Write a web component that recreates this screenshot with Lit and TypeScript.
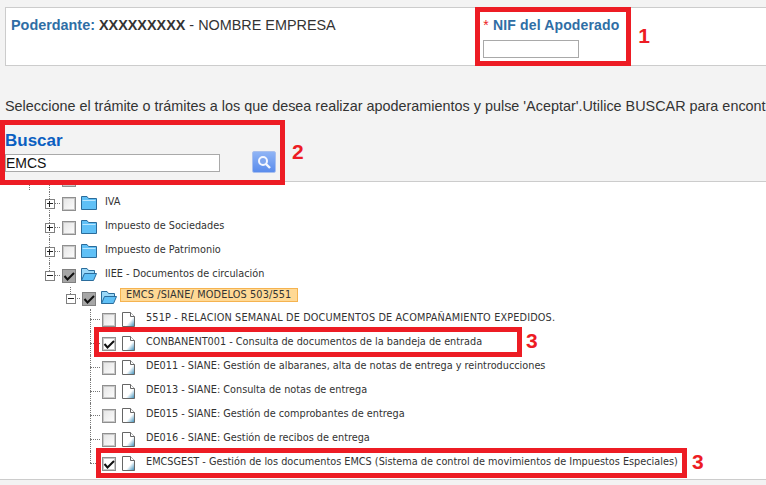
import { LitElement, html, css, svg } from "lit";
import { customElement } from "lit/decorators.js";

type Row = {
  h: number; out?: number; g: number; end?: boolean; expander?: "plus" | "minus"; check: "off" | "part" | "on";
  icon: "closed" | "open" | "page"; text: string; hl?: boolean; caps?: boolean;
};

const folderClosed = svg`<path d="M0.500 14.500v-13h5.500l1.500 2h8v11z" fill="#5fc0f6" stroke="#2b6c9b"/><path d="M1.500 5.500h13" stroke="#b9e6ff"/>`;
const folderOpen = svg`<path d="M0.500 13.500v-12h5.500l1.500 2h6v2.500" fill="#9ad8f8" stroke="#2b6c9b"/><path d="M0.500 13.500l3-7h12l-3 7z" fill="#5fc0f6" stroke="#2b6c9b"/>`;
const page = svg`<defs><linearGradient id="pg" x1="0.3" y1="0.3" x2="1" y2="1"><stop offset="0.45" stop-color="#fff"/><stop offset="1" stop-color="#2d86b5"/></linearGradient></defs><path d="M0.500 0.500h8l4 4v10h-12z" fill="url(#pg)" stroke="#666"/><path d="M8.500 0.500v4h4" fill="#fff" stroke="#666"/>`;

const rows: Row[] = [
  { h: 24, g: 49, expander: "plus", check: "off", icon: "closed", text: "IVA" },
  { h: 24, g: 49, expander: "plus", check: "off", icon: "closed", text: "Impuesto de Sociedades" },
  { h: 24, g: 49, expander: "plus", check: "off", icon: "closed", text: "Impuesto de Patrimonio" },
  { h: 24, g: 49, end: true, expander: "minus", check: "part", icon: "open", text: "IIEE - Documentos de circulación" },
  { h: 22, g: 70, end: true, expander: "minus", check: "part", icon: "open", text: "EMCS /SIANE/ MODELOS 503/551", hl: true, caps: true },
  { h: 20, out: 22, g: 90, check: "off", icon: "page", text: "551P - RELACION SEMANAL DE DOCUMENTOS DE ACOMPAÑAMIENTO EXPEDIDOS.", caps: true },
  { h: 24, g: 90, check: "on", icon: "page", text: "CONBANENT001 - Consulta de documentos de la bandeja de entrada" },
  { h: 24, g: 90, check: "off", icon: "page", text: "DE011 - SIANE: Gestión de albaranes, alta de notas de entrega y reintroducciones" },
  { h: 24, g: 90, check: "off", icon: "page", text: "DE013 - SIANE: Consulta de notas de entrega" },
  { h: 24, g: 90, check: "off", icon: "page", text: "DE015 - SIANE: Gestión de comprobantes de entrega" },
  { h: 24, g: 90, check: "off", icon: "page", text: "DE016 - SIANE: Gestión de recibos de entrega" },
  { h: 24, g: 90, end: true, check: "on", icon: "page", text: "EMCSGEST - Gestión de los documentos EMCS (Sistema de control de movimientos de Impuestos Especiales)" },
];

@customElement("app-root")
export class AppRoot extends LitElement {
  static styles = css`
    :host { display: block; width: 766px; height: 485px; overflow: hidden; background: #f3f3f3; font-family: "Liberation Sans", Arial, sans-serif; color: #333; }
    .top { margin: 7px 0 0 5px; height: 57px; background: #fff; border: 1px solid #ccc; border-right: 0; display: flex; justify-content: space-between; }
    .who { margin: 9px 0 0 5px; font-size: 14.4px; line-height: 16px; }
    .who .k { color: #2f6ea5; font-weight: bold; }
    .nif-wrap { display: flex; align-items: flex-start; margin: -1px 116px 0 0; }
    .nif { width: 146px; height: 49px; border: 5px solid #ed1c24; display: flex; flex-direction: column; }
    .nif label { font-size: 14px; font-weight: bold; color: #2f6ea5; line-height: 16px; margin: 5px 0 0 3px; white-space: nowrap; letter-spacing: 0.15px; }
    .nif label span { color: #ed1c24; font-weight: normal; }
    .nif .inp { width: 94px; height: 16px; margin: 7px 0 0 3px; border: 1px solid #a9a9a9; background: #fff; }
    .num { color: #ed1c24; font-weight: bold; font-size: 21px; line-height: 24px; }
    .nif-wrap .num { margin: 17px 0 0 7px; }
    .intro { margin: 31px 0 0 5px; font-size: 14.4px; line-height: 18px; white-space: nowrap; height: 18px; }
    .search-row { display: flex; align-items: flex-start; height: 61px; margin-top: 5px; position: relative; z-index: 2; }
    .search { box-sizing: border-box; width: 285px; height: 65px; border: 5px solid #ed1c24; position: relative; }
    .search h2 { margin: 0; font-size: 17px; line-height: 20px; padding-top: 6px; color: #0b5fc1; font-weight: bold; }
    .search .inp { box-sizing: border-box; width: 215px; height: 18px; margin-top: 3px; background: #fff; border: 1px solid #a9a9a9; font-size: 14px; line-height: 17px; color: #111; }
    .search button { position: absolute; left: 247px; top: 26px; width: 24px; height: 22px; padding: 0; border: 1px solid #a9c0ee; border-radius: 2px; background: linear-gradient(#8fb4f5, #5a8cec); display: flex; align-items: center; justify-content: center; }
    .search-row .num { margin: 20px 0 0 7px; }
    .tree { background: #fff; border-top: 1px solid #ccc; border-bottom: 1px solid #ccc; padding-top: 9px; height: 288px; position: relative; overflow: hidden; }
    .row { position: relative; font-family: "DejaVu Sans", Tahoma, sans-serif; font-stretch: condensed; font-size: 10.8px; color: #333; white-space: nowrap; }
    .in { position: absolute; left: 0; right: 0; top: 0; }
    .guide { position: absolute; width: 0; top: 0; bottom: 0; border-left: 1px dotted #777; }
    .guide.end { bottom: 50%; }
    .hline { position: absolute; height: 0; top: 50%; border-top: 1px dotted #777; }
    .exp { position: absolute; top: 50%; margin-top: -4px; box-sizing: border-box; width: 10px; height: 10px; background: #fff; border: 1px solid #808080; }
    .exp::before { content: ""; position: absolute; left: 1px; right: 1px; top: 3px; height: 1px; background: #222; }
    .exp.plus::after { content: ""; position: absolute; top: 1px; bottom: 1px; left: 3px; width: 1px; background: #222; }
    .cb { position: absolute; top: 50%; margin-top: -6px; box-sizing: border-box; width: 14px; height: 14px; border: 1px solid #8f8f8f; box-shadow: inset 0 0 0 1px #c8c8c8; background: linear-gradient(135deg, #e4e4e4, #fdfdfd); }
    .cb.part { background: #a6a6a6; border-color: #808080; box-shadow: none; }
    .cb.on { background: #fff; }
    .cb svg { display: block; position: absolute; left: -1px; top: -1px; }
    .ico { position: absolute; top: 50%; margin-top: -8px; display: block; }
    .ico.pg { margin-top: -7px; }
    .lab { position: absolute; top: 50%; transform: translateY(-50%); line-height: 14px; margin-top: -1px; }
    .lab.caps { letter-spacing: 0.15px; }
    .lab.hl { background: #ffd995; border: 1px solid #f5b350; padding: 0 6px 0 5px; box-sizing: border-box; line-height: 12px; height: 14px; margin-top: -3px; }
    .mark { position: absolute; box-sizing: border-box; border: 5px solid #ed1c24; }
    .mark.a { left: 94px; top: 145px; width: 428px; height: 30px; }
    .mark.b { left: 96px; top: 266px; width: 591px; height: 30px; }
    .mark-n { position: absolute; color: #ed1c24; font-weight: bold; font-size: 21px; line-height: 24px; }
    .mark-n.a { left: 526px; top: 147px; }
    .mark-n.b { left: 692px; top: 268px; }
    .guide.s29 { left: 29px; height: 8px; bottom: auto; }
    .guide.s49 { left: 49px; height: 10px; bottom: auto; }
    .cb.stub { left: 62px; top: -9px; margin: 0; }
  `;

  private renderRow(r: Row) {
    const left = r.g === 49 ? 62 : r.g === 70 ? 82 : 102;
    const labLeft = r.icon === "page" ? left + 44 : r.hl ? left + 38 : left + 43;
    return html`<div class="row" style="height:${r.out ?? r.h}px">
      <span class="guide ${r.end ? "end" : ""}" style="left:${r.g}px"></span>
      <div class="in" style="height:${r.h}px">
        <span class="hline" style="left:${r.g}px;width:${left - r.g - 2}px"></span>
        ${r.expander ? html`<span class="exp ${r.expander}" style="left:${r.g - 4}px"></span>` : ""}
        <span class="cb ${r.check}" style="left:${left}px">
          ${r.check !== "off" ? html`<svg width="14" height="14" viewBox="0 0 14 14"><path d="M2.500 7l3 3.500 6.500-6.500" fill="none" stroke="#111" stroke-width="2"/></svg>` : ""}
        </span>
        ${r.icon === "page"
          ? html`<svg class="ico pg" style="left:${left + 20}px" width="14" height="16" viewBox="0 0 14 16">${page}</svg>`
          : html`<svg class="ico" style="left:${left + 19}px" width="17" height="16" viewBox="0 0 17 16">${r.icon === "open" ? folderOpen : folderClosed}</svg>`}
        <span class="lab ${r.hl ? "hl" : ""} ${r.caps ? "caps" : ""}" style="left:${labLeft}px">${r.text}</span>
      </div>
    </div>`;
  }

  render() {
    return html`
      <div class="top">
        <div class="who"><span class="k">Poderdante:</span> <b>XXXXXXXXX</b> - NOMBRE EMPRESA</div>
        <div class="nif-wrap">
          <div class="nif">
            <label><span>*</span> NIF del Apoderado</label>
            <div class="inp"></div>
          </div>
          <span class="num">1</span>
        </div>
      </div>
      <div class="intro">Seleccione el trámite o trámites a los que desea realizar apoderamientos y pulse 'Aceptar'.Utilice BUSCAR para encontrar el trámite</div>
      <div class="search-row">
        <div class="search">
          <h2>Buscar</h2>
          <div class="inp">EMCS</div>
          <button aria-label="Buscar">
            <svg width="16" height="16" viewBox="0 0 16 16"><circle cx="7" cy="7" r="4" fill="#7fa6ee" stroke="#f4f7ff" stroke-width="2"/><path d="M10 10l4 4" stroke="#f2f6ff" stroke-width="2.400"/></svg>
          </button>
        </div>
        <span class="num">2</span>
      </div>
      <div class="tree">
        <span class="guide s29"></span>
        <span class="guide s49"></span>
        <span class="cb stub"></span>
        ${rows.map((r) => this.renderRow(r))}
        <div class="mark a"></div>
        <div class="mark-n a">3</div>
        <div class="mark b"></div>
        <div class="mark-n b">3</div>
      </div>
    `;
  }
}
